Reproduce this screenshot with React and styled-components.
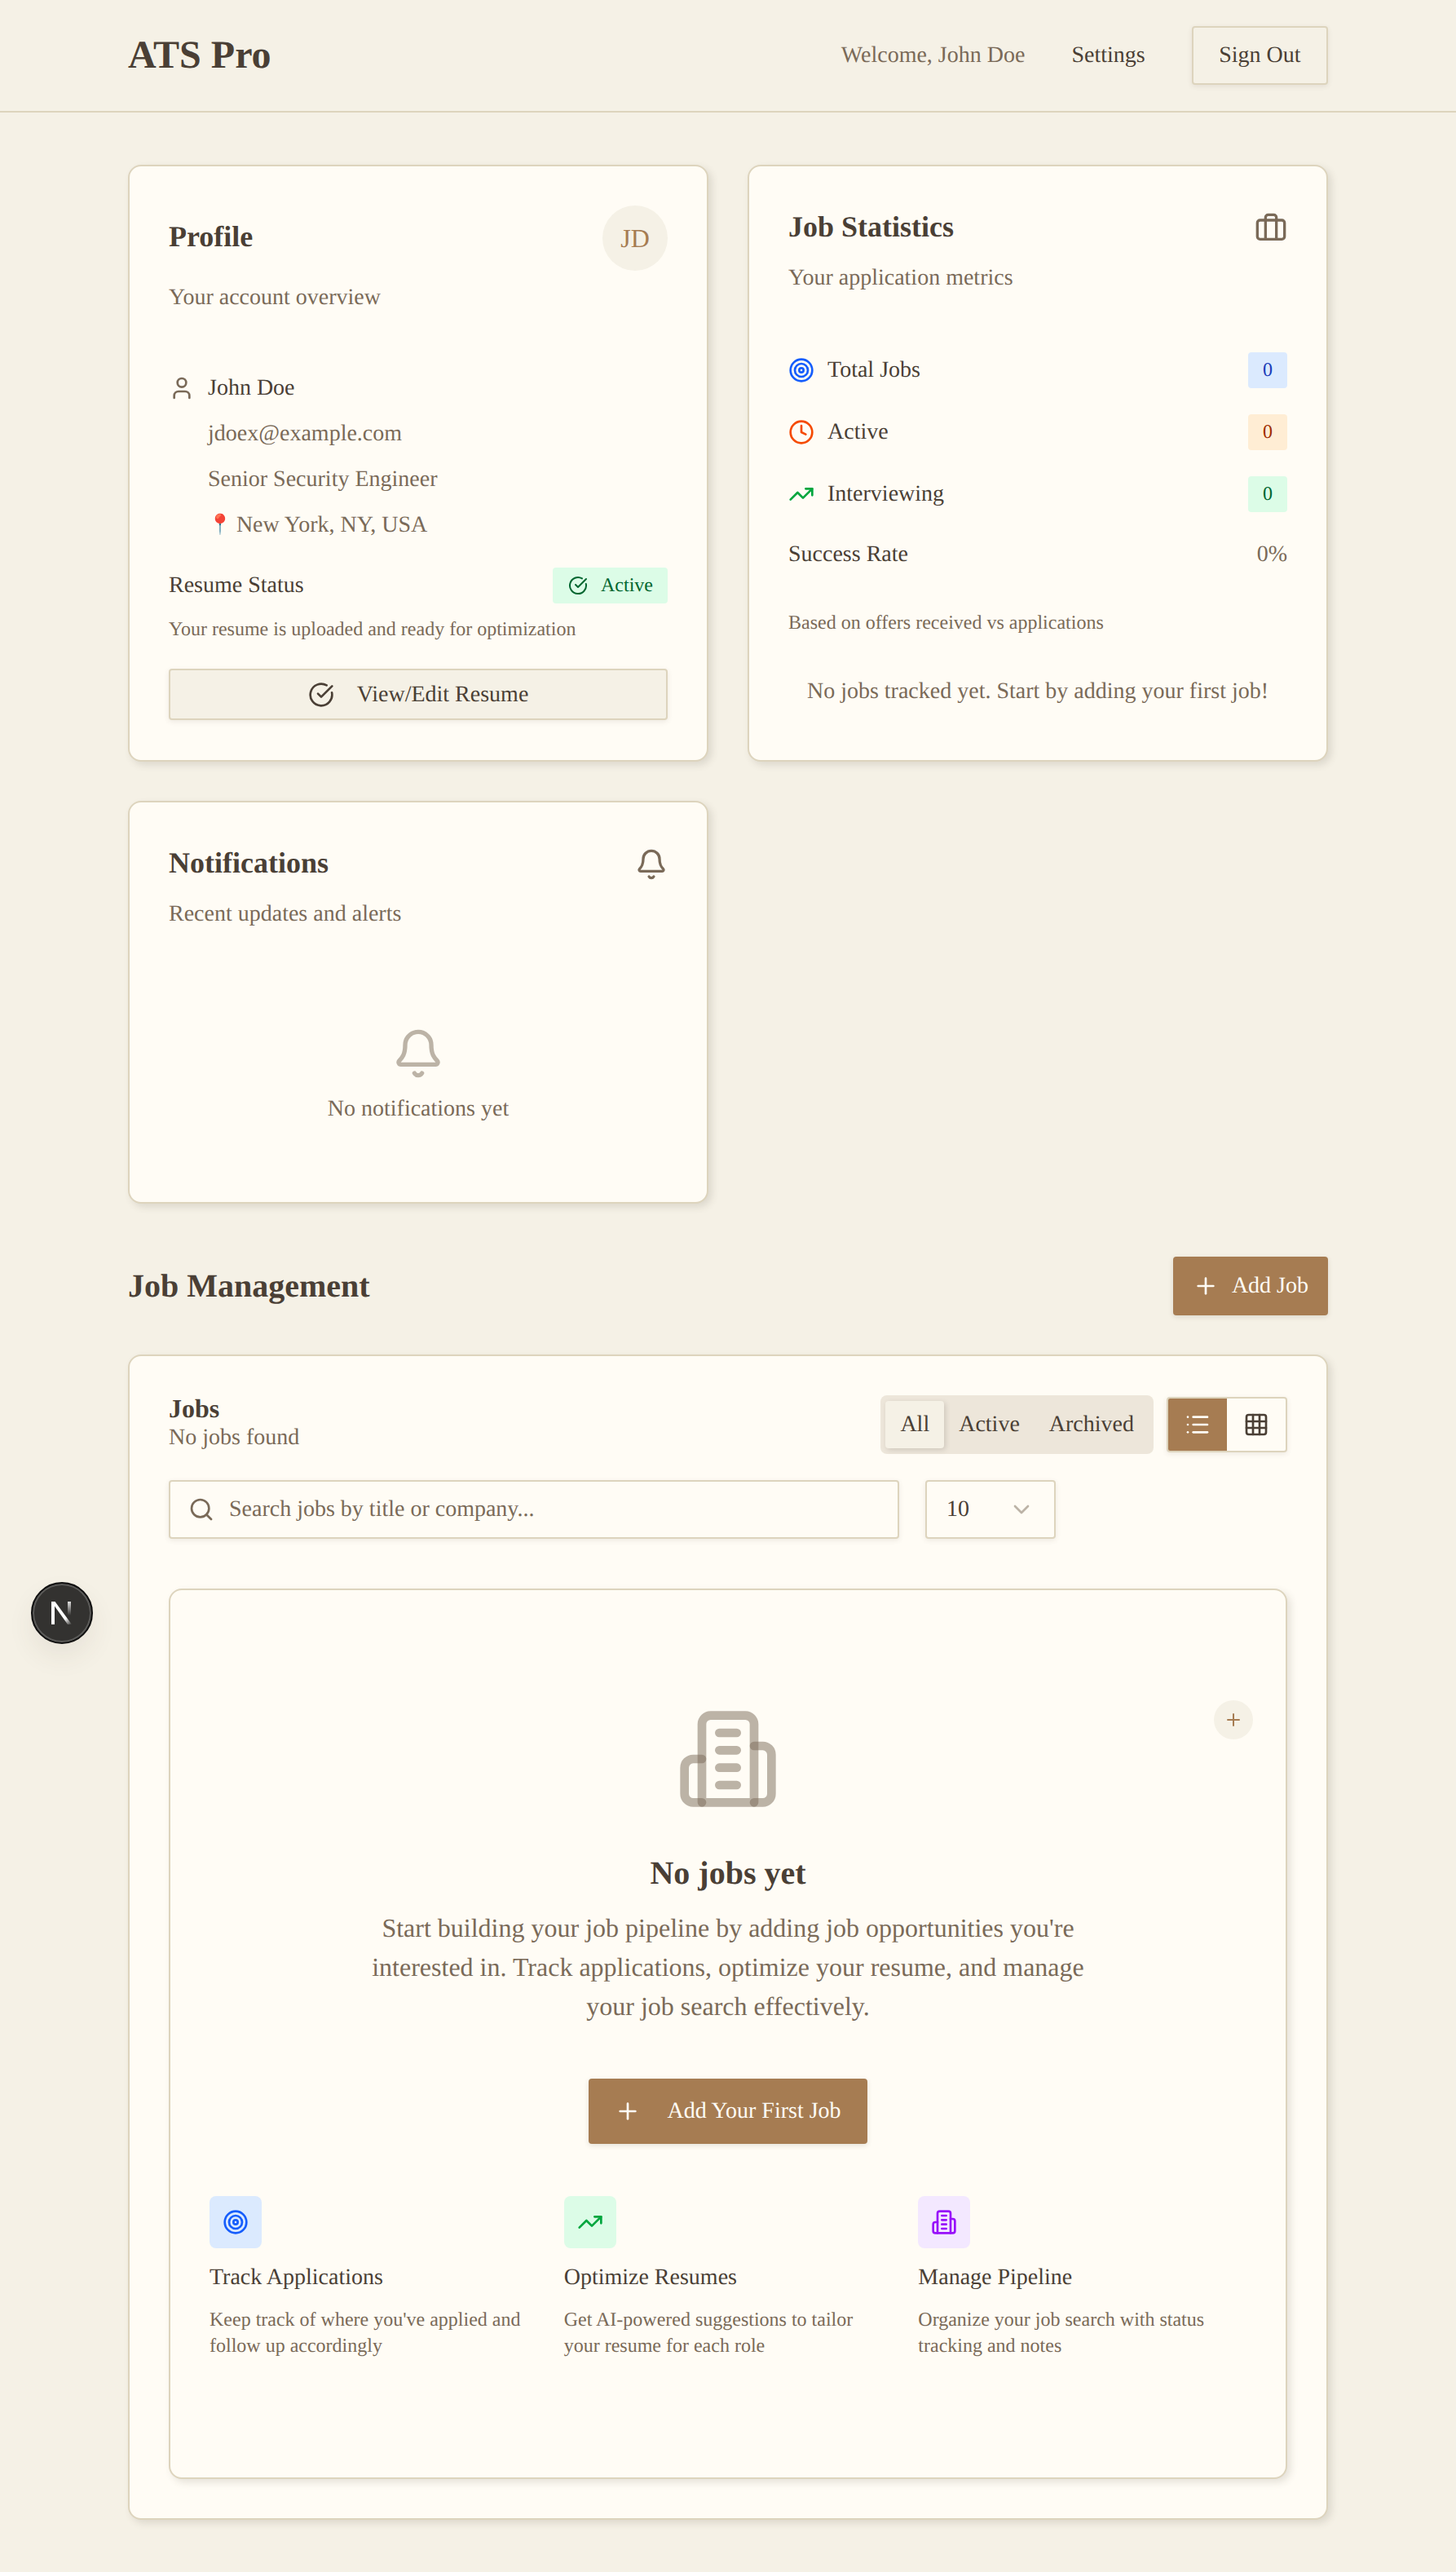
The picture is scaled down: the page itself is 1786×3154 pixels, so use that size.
import styled, { createGlobalStyle } from 'styled-components';
import {
  Bell,
  Briefcase,
  ChevronDown,
  CircleCheckBig,
  Clock,
  Grid3x3,
  List,
  Plus,
  Search,
  Target,
  TrendingUp,
  User,
} from 'lucide-react';

const C = {
  bg: '#f5f1e6',
  card: '#fffcf5',
  border: '#ddd4bd',
  ink: '#4a3f35',
  muted: '#7a6a58',
  accent: '#a67c52',
  tabs: '#ede6da',
};

const GlobalStyle = createGlobalStyle`
  * {
    box-sizing: border-box;
    text-rendering: geometricPrecision;
  }

  html,
  body {
    margin: 0;
    background: ${C.bg};
  }

  body {
    min-height: 3154px;
    font-family: 'Liberation Serif', 'Times New Roman', serif;
    font-size: 28px;
    line-height: 40px;
    color: ${C.ink};
  }

  h1,
  h2,
  h3,
  p {
    margin: 0;
  }
`;

// the rung version of the building icon, the package one has a door
const BuildingIcon = ({ size, color }) => (
  <svg
    width={size}
    height={size}
    viewBox="0 0 24 24"
    fill="none"
    stroke={color}
    strokeWidth="2"
    strokeLinecap="round"
    strokeLinejoin="round"
  >
    <path d="M6 22V4a2 2 0 0 1 2-2h8a2 2 0 0 1 2 2v18Z" />
    <path d="M6 12H4a2 2 0 0 0-2 2v6a2 2 0 0 0 2 2h2" />
    <path d="M18 9h2a2 2 0 0 1 2 2v9a2 2 0 0 1-2 2h-2" />
    <path d="M10 6h4" />
    <path d="M10 10h4" />
    <path d="M10 14h4" />
    <path d="M10 18h4" />
  </svg>
);

const STATS = [
  { label: 'Total Jobs', Icon: Target, iconColor: '#155dfc', bg: '#dbeafe', fg: '#193cb8' },
  { label: 'Active', Icon: Clock, iconColor: '#f54a00', bg: '#ffedd4', fg: '#9f2d00' },
  { label: 'Interviewing', Icon: TrendingUp, iconColor: '#00a63e', bg: '#dcfce7', fg: '#016630' },
];

const FEATURES = [
  {
    title: 'Track Applications',
    text: "Keep track of where you've applied and follow up accordingly",
    Icon: Target,
    iconColor: '#155dfc',
    bg: '#dbeafe',
  },
  {
    title: 'Optimize Resumes',
    text: 'Get AI-powered suggestions to tailor your resume for each role',
    Icon: TrendingUp,
    iconColor: '#00a63e',
    bg: '#dcfce7',
  },
  {
    title: 'Manage Pipeline',
    text: 'Organize your job search with status tracking and notes',
    Icon: BuildingIcon,
    iconColor: '#9810fa',
    bg: '#f3e8ff',
  },
];

const App = () => {
  return (
    <>
      <GlobalStyle />
      <StHeader>
        <StHeaderInner>
          <StLogo>ATS Pro</StLogo>
          <StNav>
            <StWelcome>Welcome, John Doe</StWelcome>
            <StNavLink>Settings</StNavLink>
            <StOutlineButton>Sign Out</StOutlineButton>
          </StNav>
        </StHeaderInner>
      </StHeader>

      <StMain>
        <StCardGrid>
          <StCard>
            <StCardHead>
              <StCardTitle>Profile</StCardTitle>
              <StAvatar>JD</StAvatar>
            </StCardHead>
            <StCardDesc>Your account overview</StCardDesc>
            <StProfileList>
              <StProfileName>
                <User size={32} color={C.muted} />
                John Doe
              </StProfileName>
              <StProfileLine>jdoex@example.com</StProfileLine>
              <StProfileLine>Senior Security Engineer</StProfileLine>
              <StProfileLine>
                <StPin>📍</StPin> New York, NY, USA
              </StProfileLine>
            </StProfileList>
            <StResumeRow>
              <span>Resume Status</span>
              <StActiveBadge>
                <CircleCheckBig size={24} />
                Active
              </StActiveBadge>
            </StResumeRow>
            <StSmallText>Your resume is uploaded and ready for optimization</StSmallText>
            <StResumeButton>
              <CircleCheckBig size={32} />
              View/Edit Resume
            </StResumeButton>
          </StCard>

          <StCard>
            <StCardHead>
              <StCardTitle>Job Statistics</StCardTitle>
              <Briefcase size={40} color={C.muted} />
            </StCardHead>
            <StCardDesc>Your application metrics</StCardDesc>
            <StStatList>
              {STATS.map(({ label, Icon, iconColor, bg, fg }) => (
                <StStatRow key={label}>
                  <StStatLabel>
                    <Icon size={32} color={iconColor} />
                    {label}
                  </StStatLabel>
                  <StCountBadge $bg={bg} $fg={fg}>
                    0
                  </StCountBadge>
                </StStatRow>
              ))}
              <StStatRow>
                <span>Success Rate</span>
                <StMuted>0%</StMuted>
              </StStatRow>
            </StStatList>
            <StBasedOn>Based on offers received vs applications</StBasedOn>
            <StNoTracked>No jobs tracked yet. Start by adding your first job!</StNoTracked>
          </StCard>

          <StCard>
            <StCardHead>
              <StCardTitle>Notifications</StCardTitle>
              <Bell size={40} color={C.muted} />
            </StCardHead>
            <StCardDesc>Recent updates and alerts</StCardDesc>
            <StNotifyEmpty>
              <Bell size={64} color="rgba(122, 106, 88, 0.5)" />
              <StMuted>No notifications yet</StMuted>
            </StNotifyEmpty>
          </StCard>
        </StCardGrid>

        <StSectionHead>
          <StSectionTitle>Job Management</StSectionTitle>
          <StAddButton>
            <Plus size={32} />
            Add Job
          </StAddButton>
        </StSectionHead>

        <StJobsCard>
          <StJobsTop>
            <div>
              <StJobsTitle>Jobs</StJobsTitle>
              <StMuted as="p">No jobs found</StMuted>
            </div>
            <StJobsControls>
              <StTabs>
                <StTab $active>All</StTab>
                <StTab>Active</StTab>
                <StTab>Archived</StTab>
              </StTabs>
              <StViewToggle>
                <StViewButton $active>
                  <List size={32} />
                </StViewButton>
                <StViewButton>
                  <Grid3x3 size={32} />
                </StViewButton>
              </StViewToggle>
            </StJobsControls>
          </StJobsTop>

          <StFilters>
            <StSearch>
              <Search size={32} color={C.muted} />
              <StSearchInput placeholder="Search jobs by title or company..." />
            </StSearch>
            <StSelect>
              10
              <ChevronDown size={32} color="rgba(122, 106, 88, 0.5)" />
            </StSelect>
          </StFilters>

          <StEmptyBox>
            <StFloatPlus>
              <Plus size={24} />
            </StFloatPlus>
            <BuildingIcon size={128} color="rgba(122, 106, 88, 0.5)" />
            <StEmptyTitle>No jobs yet</StEmptyTitle>
            <StEmptyText>
              Start building your job pipeline by adding job opportunities you&apos;re interested in. Track
              applications, optimize your resume, and manage your job search effectively.
            </StEmptyText>
            <StFirstJobButton>
              <Plus size={32} />
              Add Your First Job
            </StFirstJobButton>
            <StFeatures>
              {FEATURES.map(({ title, text, Icon, iconColor, bg }) => (
                <div key={title}>
                  <StFeatureIcon $bg={bg}>
                    <Icon size={32} color={iconColor} />
                  </StFeatureIcon>
                  <StFeatureTitle>{title}</StFeatureTitle>
                  <StFeatureText>{text}</StFeatureText>
                </div>
              ))}
            </StFeatures>
          </StEmptyBox>
        </StJobsCard>
      </StMain>

      <StDevBadge>
        <svg width="26" height="28" viewBox="0 0 26 28" fill="none">
          <defs>
            <linearGradient id="nDiagonal" gradientUnits="userSpaceOnUse" x1="10" y1="10" x2="25" y2="28">
              <stop offset="0" stopColor="#fff" />
              <stop offset="0.55" stopColor="#fff" />
              <stop offset="1" stopColor="#fff" stopOpacity="0" />
            </linearGradient>
            <linearGradient id="nStem" x1="0" y1="0" x2="0" y2="1">
              <stop offset="0" stopColor="#fff" stopOpacity="0.85" />
              <stop offset="1" stopColor="#fff" stopOpacity="0" />
            </linearGradient>
          </defs>
          <rect x="0" y="0" width="4" height="28" fill="#fff" />
          <path d="M0 0h4.5L25 28h-5Z" fill="url(#nDiagonal)" />
          <rect x="20" y="0" width="4" height="17" fill="url(#nStem)" />
        </svg>
      </StDevBadge>
    </>
  );
};

export default App;

const StHeader = styled.header`
  height: 138px;
  border-bottom: 2px solid ${C.border};
`;

const StHeaderInner = styled.div`
  width: 1472px;
  height: 100%;
  margin: 0 auto;
  display: flex;
  align-items: center;
  justify-content: space-between;
`;

const StLogo = styled.h1`
  font-size: 48px;
  font-weight: 700;
  line-height: 64px;
`;

const StNav = styled.nav`
  display: flex;
  align-items: center;
  gap: 57px;
`;

const StWelcome = styled.span`
  color: ${C.muted};
`;

const StNavLink = styled.a`
  color: ${C.ink};
`;

const StOutlineButton = styled.button`
  height: 72px;
  padding: 0 31.5px;
  font: inherit;
  color: ${C.ink};
  background: ${C.bg};
  border: 2px solid ${C.border};
  border-radius: 4px;
  box-shadow: 0 2px 6px rgba(74, 63, 53, 0.1);
`;

const StMain = styled.main`
  width: 1472px;
  margin: 0 auto;
  padding: 64px 0;
`;

const StCardGrid = styled.div`
  display: grid;
  grid-template-columns: 1fr 1fr;
  gap: 48px;
`;

const StCard = styled.section`
  padding: 48px;
  background: ${C.card};
  border: 2px solid ${C.border};
  border-radius: 16px;
  box-shadow: 4px 4px 10px rgba(74, 63, 53, 0.14);
`;

const StCardHead = styled.div`
  display: flex;
  align-items: center;
  justify-content: space-between;
`;

const StCardTitle = styled.h2`
  padding-bottom: 4px;
  font-size: 36px;
  font-weight: 700;
  line-height: 52px;
`;

const StAvatar = styled.div`
  width: 80px;
  height: 80px;
  display: flex;
  align-items: center;
  justify-content: center;
  font-size: 32px;
  color: ${C.accent};
  background: ${C.bg};
  border-radius: 50%;
`;

const StCardDesc = styled.p`
  margin-top: 13px;
  color: ${C.muted};
`;

const StProfileList = styled.div`
  display: flex;
  flex-direction: column;
  gap: 16px;
  margin-top: 71px;
`;

const StProfileName = styled.div`
  display: flex;
  align-items: center;
  gap: 16px;
`;

const StProfileLine = styled.p`
  padding-left: 48px;
  color: ${C.muted};
`;

const StPin = styled.span`
  font-size: 24px;
  margin-right: -2px;
  vertical-align: 1px;
`;

const StResumeRow = styled.div`
  display: flex;
  align-items: center;
  justify-content: space-between;
  margin-top: 32px;
`;

const StActiveBadge = styled.span`
  height: 44px;
  display: inline-flex;
  align-items: center;
  gap: 16px;
  padding: 0 18px 0 19px;
  font-size: 24px;
  color: #016630;
  background: #dcfce7;
  border-radius: 4px;
`;

const StSmallText = styled.p`
  margin-top: 16px;
  font-size: 24px;
  line-height: 32px;
  color: ${C.muted};
`;

const StResumeButton = styled.button`
  width: 100%;
  height: 63px;
  margin: 32px 0 1px;
  display: flex;
  align-items: center;
  justify-content: center;
  gap: 28px;
  font: inherit;
  color: ${C.ink};
  background: ${C.bg};
  border: 2px solid ${C.border};
  border-radius: 4px;
  box-shadow: 0 2px 6px rgba(74, 63, 53, 0.1);
`;

const StStatList = styled.div`
  display: flex;
  flex-direction: column;
  gap: 32px;
  margin-top: 71px;
`;

const StStatRow = styled.div`
  display: flex;
  align-items: center;
  justify-content: space-between;
`;

const StStatLabel = styled.span`
  display: flex;
  align-items: center;
  gap: 16px;
`;

const StCountBadge = styled.span`
  width: 48px;
  height: 44px;
  display: flex;
  align-items: center;
  justify-content: center;
  font-size: 24px;
  color: ${(props) => props.$fg};
  background: ${(props) => props.$bg};
  border-radius: 4px;
`;

const StMuted = styled.span`
  color: ${C.muted};
`;

const StBasedOn = styled.p`
  margin-top: 48px;
  font-size: 24px;
  line-height: 32px;
  color: ${C.muted};
`;

const StNoTracked = styled.p`
  margin-top: 48px;
  text-align: center;
  color: ${C.muted};
`;

const StNotifyEmpty = styled.div`
  display: flex;
  flex-direction: column;
  align-items: center;
  gap: 16px;
  padding: 119px 0 46px;
`;

const StSectionHead = styled.div`
  display: flex;
  align-items: center;
  justify-content: space-between;
  margin-top: 65px;
`;

const StSectionTitle = styled.h2`
  font-size: 40px;
  font-weight: 700;
  line-height: 56px;
`;

const StPrimaryButton = styled.button`
  display: inline-flex;
  align-items: center;
  font: inherit;
  color: #fffcf5;
  background: ${C.accent};
  border: 0;
  border-radius: 4px;
  box-shadow: 0 2px 6px rgba(74, 63, 53, 0.14);
`;

const StAddButton = styled(StPrimaryButton)`
  height: 72px;
  padding: 0 24px;
  gap: 16px;
`;

const StJobsCard = styled(StCard)`
  margin-top: 48px;
`;

const StJobsTop = styled.div`
  display: flex;
  align-items: center;
  justify-content: space-between;
`;

const StJobsTitle = styled.h3`
  font-size: 32px;
  font-weight: 700;
  line-height: 32px;
`;

const StJobsControls = styled.div`
  display: flex;
  align-items: center;
  gap: 16px;
`;

const StTabs = styled.div`
  height: 72px;
  display: flex;
  align-items: center;
  padding: 0 6px;
  background: ${C.tabs};
  border-radius: 8px;
`;

const StTab = styled.button`
  height: 58px;
  padding: 0 18px;
  font: inherit;
  color: ${C.ink};
  border: 0;
  border-radius: 4px;
  background: ${(props) => (props.$active ? C.bg : 'transparent')};
  box-shadow: ${(props) => (props.$active ? '2px 2px 6px rgba(74, 63, 53, 0.18)' : 'none')};
`;

const StViewToggle = styled.div`
  display: flex;
  overflow: hidden;
  background: ${C.card};
  border: 2px solid ${C.border};
  border-radius: 4px;
  box-shadow: 0 2px 6px rgba(74, 63, 53, 0.1);
`;

const StViewButton = styled.button`
  width: 72px;
  height: 64px;
  display: flex;
  align-items: center;
  justify-content: center;
  padding: 0;
  border: 0;
  color: ${(props) => (props.$active ? C.card : C.ink)};
  background: ${(props) => (props.$active ? C.accent : 'transparent')};
`;

const StFilters = styled.div`
  display: flex;
  gap: 32px;
  margin-top: 32px;
`;

const StSearch = styled.div`
  width: 896px;
  height: 72px;
  display: flex;
  align-items: center;
  gap: 18px;
  padding: 0 22px;
  background: ${C.card};
  border: 2px solid ${C.border};
  border-radius: 4px;
  box-shadow: 0 2px 6px rgba(74, 63, 53, 0.1);
`;

const StSearchInput = styled.input`
  flex: 1;
  min-width: 0;
  padding: 0;
  font: inherit;
  color: ${C.ink};
  background: transparent;
  border: 0;
  outline: 0;

  &::placeholder {
    color: ${C.muted};
    opacity: 1;
  }
`;

const StSelect = styled.div`
  width: 160px;
  height: 72px;
  display: flex;
  align-items: center;
  justify-content: space-between;
  padding: 0 24px;
  background: ${C.card};
  border: 2px solid ${C.border};
  border-radius: 4px;
  box-shadow: 0 2px 6px rgba(74, 63, 53, 0.1);
`;

const StEmptyBox = styled.div`
  position: relative;
  margin-top: 61px;
  padding: 143px 48px 145px;
  display: flex;
  flex-direction: column;
  align-items: center;
  background: ${C.card};
  border: 2px solid ${C.border};
  border-radius: 16px;
  box-shadow: 4px 4px 10px rgba(74, 63, 53, 0.14);
`;

const StFloatPlus = styled.div`
  position: absolute;
  top: 135px;
  right: 40px;
  width: 48px;
  height: 48px;
  display: flex;
  align-items: center;
  justify-content: center;
  color: ${C.accent};
  background: ${C.bg};
  border-radius: 50%;
`;

const StEmptyTitle = styled.h3`
  margin-top: 48px;
  font-size: 40px;
  font-weight: 700;
  line-height: 56px;
`;

const StEmptyText = styled.p`
  width: 896px;
  margin-top: 15px;
  text-align: center;
  font-size: 32px;
  line-height: 48px;
  color: ${C.muted};
`;

const StFirstJobButton = styled(StPrimaryButton)`
  height: 80px;
  margin-top: 65px;
  padding: 0 32px;
  gap: 32px;
`;

const StFeatures = styled.div`
  width: 100%;
  display: grid;
  grid-template-columns: repeat(3, 1fr);
  gap: 32px;
  margin-top: 64px;
`;

const StFeatureIcon = styled.div`
  width: 64px;
  height: 64px;
  display: flex;
  align-items: center;
  justify-content: center;
  background: ${(props) => props.$bg};
  border-radius: 8px;
`;

const StFeatureTitle = styled.h4`
  margin: 16px 0 0;
  font-size: 28px;
  font-weight: 400;
  line-height: 40px;
`;

const StFeatureText = styled.p`
  margin-top: 16px;
  font-size: 24px;
  line-height: 32px;
  color: ${C.muted};
`;

const StDevBadge = styled.div`
  position: absolute;
  left: 38px;
  top: 1940px;
  width: 76px;
  height: 76px;
  display: flex;
  align-items: center;
  justify-content: center;
  background: #333230;
  border: 2px solid #111;
  border-radius: 50%;
  box-shadow: inset 0 0 0 2px rgba(255, 255, 255, 0.2), 0 16px 32px rgba(74, 63, 53, 0.08);
`;
